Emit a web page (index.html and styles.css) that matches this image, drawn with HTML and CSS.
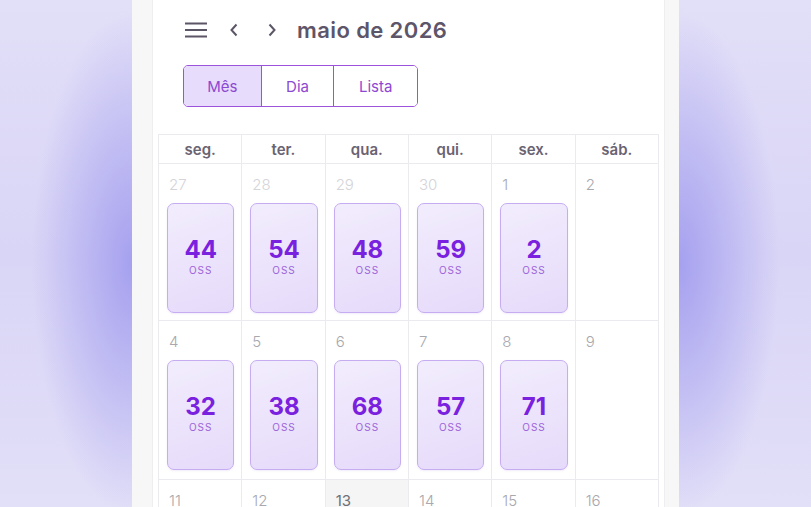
FILE: index.html
```html
<!DOCTYPE html>
<html lang="pt">
<head>
<meta charset="utf-8">
<title>Calendário</title>
<link rel="stylesheet" href="styles.css">
</head>
<body>
<div class="page">
  <div class="panel">
    <div class="card">
      <div class="toolbar">
        <svg class="icon-menu" width="22" height="16" viewBox="0 0 22 16"><path d="M0 1.5H22M0 8H22M0 14.5H22" stroke="#5c5566" stroke-width="2"/></svg>
        <svg class="icon-chev" width="10" height="16" viewBox="0 0 10 16"><path d="M7.5 2.5L2.5 8L7.5 13.5" fill="none" stroke="#5c5566" stroke-width="2"/></svg>
        <svg class="icon-chev next" width="10" height="16" viewBox="0 0 10 16"><path d="M2.5 2.5L7.5 8L2.5 13.5" fill="none" stroke="#5c5566" stroke-width="2"/></svg>
        <h1 class="title">maio de 2026</h1>
      </div>
      <div class="views">
        <button class="view active">Mês</button>
        <button class="view">Dia</button>
        <button class="view">Lista</button>
      </div>
      <div class="calendar">
        <div class="dow">seg.</div><div class="dow">ter.</div><div class="dow">qua.</div><div class="dow">qui.</div><div class="dow">sex.</div><div class="dow">sáb.</div>

        <div class="day other"><span class="num">27</span><div class="ev"><b>44</b><small>OSS</small></div></div>
        <div class="day other"><span class="num">28</span><div class="ev"><b>54</b><small>OSS</small></div></div>
        <div class="day other"><span class="num">29</span><div class="ev"><b>48</b><small>OSS</small></div></div>
        <div class="day other"><span class="num">30</span><div class="ev"><b>59</b><small>OSS</small></div></div>
        <div class="day"><span class="num">1</span><div class="ev"><b>2</b><small>OSS</small></div></div>
        <div class="day"><span class="num">2</span></div>

        <div class="day"><span class="num">4</span><div class="ev"><b>32</b><small>OSS</small></div></div>
        <div class="day"><span class="num">5</span><div class="ev"><b>38</b><small>OSS</small></div></div>
        <div class="day"><span class="num">6</span><div class="ev"><b>68</b><small>OSS</small></div></div>
        <div class="day"><span class="num">7</span><div class="ev"><b>57</b><small>OSS</small></div></div>
        <div class="day"><span class="num">8</span><div class="ev"><b>71</b><small>OSS</small></div></div>
        <div class="day"><span class="num">9</span></div>

        <div class="day"><span class="num">11</span></div>
        <div class="day"><span class="num">12</span></div>
        <div class="day today"><span class="num">13</span></div>
        <div class="day"><span class="num">14</span></div>
        <div class="day"><span class="num">15</span></div>
        <div class="day"><span class="num">16</span></div>
      </div>
    </div>
  </div>
</div>
</body>
</html>
```
FILE: styles.css
```css
* { box-sizing: border-box; }
html, body { margin: 0; padding: 0; }
body {
  font-family: "Inter", "Noto Sans", sans-serif;
  width: 811px;
  height: 507px;
  overflow: hidden;
}
.page {
  height: 507px;
  display: flex;
  justify-content: center;
  background:
    radial-gradient(ellipse 100px 250px at 132px 52%, rgba(160,155,238,0.9), rgba(160,155,238,0) 100%),
    radial-gradient(ellipse 100px 250px at 679px 52%, rgba(160,155,238,0.9), rgba(160,155,238,0) 100%),
    linear-gradient(180deg, #e2dff8 0%, #d9d5f6 50%, #e2dff8 100%);
  overflow: hidden;
}
.panel {
  width: 547px;
  height: 507px;
  background: #f7f7f8;
  padding: 0 14px 0 20px;
}
.card {
  background: #fff;
  height: 507px;
  border-left: 1px solid #eeeef1;
  border-right: 1px solid #eeeef1;
  padding: 0 5px 0 5px;
}
.toolbar {
  display: flex;
  align-items: center;
  height: 60px;
  padding-left: 27px;
}
.icon-menu { margin-right: 22px; }
.icon-chev.next { margin-left: 28px; margin-right: 20px; }
.title {
  margin: 0;
  font-size: 22px;
  font-weight: 600;
  color: #5d5569;
  letter-spacing: 0.4px;
}
.views {
  display: flex;
  margin-left: 25px;
  margin-top: 5px;
  width: 235px;
  height: 42px;
  border: 1px solid #9d52dc;
  border-radius: 5px;
  overflow: hidden;
}
.view {
  font-family: inherit;
  font-size: 15px;
  color: #8d48d2;
  background: #fff;
  border: 0;
  border-right: 1px solid #9d52dc;
  padding: 0;
  height: 100%;
}
.view:nth-child(1) { width: 78px; }
.view:nth-child(2) { width: 73px; }
.view:nth-child(3) { width: 83px; border-right: 0; }
.view.active { background: #e7dcfb; }
.calendar {
  margin-top: 27px;
  width: 501px;
  display: grid;
  grid-template-columns: repeat(6, 1fr);
  grid-template-rows: 29px 157px 159px 40px;
  border-top: 1px solid #ebebef;
  border-left: 1px solid #ebebef;
}
.dow, .day {
  border-right: 1px solid #ebebef;
  border-bottom: 1px solid #ebebef;
}
.dow {
  display: flex;
  align-items: center;
  justify-content: center;
  font-size: 15px;
  font-weight: 600;
  color: #6a6371;
}
.day {
  padding: 11px 7px 0 8px;
  display: flex;
  flex-direction: column;
}
.num {
  font-size: 15px;
  line-height: 20px;
  font-weight: 300;
  color: #a8a8ae;
  padding-left: 2px;
}
.day.other .num { color: #d4d4d9; }
.day.today { background: #f5f5f6; }
.day.today .num { color: #6f6f75; font-weight: 400; }
.ev {
  margin-top: 8px;
  height: 110px;
  border: 1px solid #c6acf0;
  border-radius: 7px;
  background: linear-gradient(160deg, #f2edfd 0%, #e6dafa 100%);
  box-shadow: 0 1px 2px rgba(140, 100, 210, 0.12);
  display: flex;
  flex-direction: column;
  align-items: center;
  justify-content: center;
  padding-bottom: 3px;
}
.ev b {
  font-size: 24px;
  line-height: 28px;
  font-weight: 700;
  color: #7a20df;
}
.ev small {
  font-size: 10px;
  line-height: 13px;
  letter-spacing: 1px;
  color: #9c63da;
}
```
